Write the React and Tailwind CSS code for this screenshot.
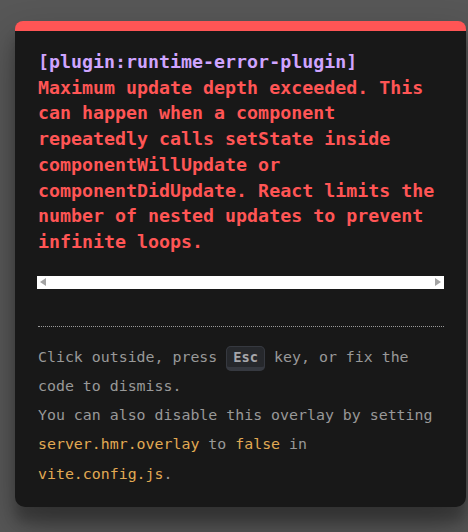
export default function App() {
  const messageLines = [
    "Maximum update depth exceeded. This",
    "can happen when a component",
    "repeatedly calls setState inside",
    "componentWillUpdate or",
    "componentDidUpdate. React limits the",
    "number of nested updates to prevent",
    "infinite loops.",
  ];

  return (
    <div className="min-h-[532px] w-[468px] bg-[#575757] pt-[21px] pl-[15px] font-['DejaVu_Sans_Mono',monospace]">
      <div className="w-[451px] bg-[#181818] border-t-[10px] border-[#ff5555] rounded-t-[8px] rounded-b-[10px] shadow-[0_19px_38px_rgba(0,0,0,0.30),0_15px_12px_rgba(0,0,0,0.22)] pt-[18px] pb-[18px] pl-[23px] pr-[22px]">
        {/* Message */}
        <div className="text-[18.3px] leading-[25.7px] font-bold whitespace-pre">
          <div className="text-[#cfa4ff]">[plugin:runtime-error-plugin]</div>
          {messageLines.map((line) => (
            <div key={line} className="text-[#ff5555]">
              {line}
            </div>
          ))}
        </div>

        {/* Fake horizontal scrollbar */}
        <div className="mt-[21px] h-[13px] w-[407px] -ml-[1px] bg-white flex items-center justify-between px-[3px]">
          <div className="w-0 h-0 border-y-[4px] border-y-transparent border-r-[6px] border-r-[#a3a3a3]" />
          <div className="w-0 h-0 border-y-[4px] border-y-transparent border-l-[6px] border-l-[#a3a3a3]" />
        </div>

        {/* Tip */}
        <div className="mt-[37px] border-t border-dotted border-[#999] pt-[16px] text-[14.9px] leading-[29.25px] text-[#999] whitespace-pre">
          <div>
            Click outside, press{" "}
            <kbd className="font-['DejaVu_Sans_Mono',monospace] text-[13.75px] font-bold bg-[#26282c] text-[#a6a7ab] px-[6px] py-[2px] rounded-[5px] border border-b-[4px] border-[#363940] leading-[1.5]">
              Esc
            </kbd>{" "}
            key, or fix the
          </div>
          <div>code to dismiss.</div>
          <div>You can also disable this overlay by setting</div>
          <div>
            <span className="text-[#e2aa53]">server.hmr.overlay</span> to{" "}
            <span className="text-[#e2aa53]">false</span> in
          </div>
          <div>
            <span className="text-[#e2aa53]">vite.config.js</span>.
          </div>
        </div>
      </div>
    </div>
  );
}
